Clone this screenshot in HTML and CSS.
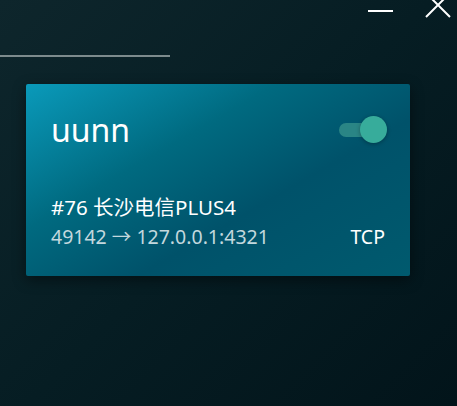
FILE: index.html
```html
<!DOCTYPE html>
<html lang="zh-CN">
  <head>
    <meta charset="UTF-8" />
    <meta name="viewport" content="width=device-width, initial-scale=1.0" />
    <title>Tunnels</title>
    <link rel="stylesheet" href="styles.css">
  </head>
  <body>
    <header class="titlebar">
      <button class="win-btn minimize" title="Minimize">
        <svg width="26" height="18" viewBox="0 0 26 18"><path d="M0 11 H25" stroke="#fff" stroke-width="2" /></svg>
      </button>
      <button class="win-btn close" title="Close">
        <svg width="30" height="18" viewBox="0 0 30 18"><path d="M2 -7 L26 17 M26 -7 L2 17" stroke="#fff" stroke-width="2" /></svg>
      </button>
    </header>

    <div class="tab-line"></div>

    <section class="tunnel">
      <div class="tunnel-head">
        <h2>uunn</h2>
        <label class="switch">
          <span class="track"></span>
          <span class="knob"></span>
        </label>
      </div>
      <p class="node">#76 长沙电信PLUS4</p>
      <div class="tunnel-foot">
        <span class="route">49142 → 127.0.0.1:4321</span>
        <span class="proto">TCP</span>
      </div>
    </section>
  </body>
</html>
```

FILE: styles.css
```css
html,
body {
  height: 100%;
}

body {
  margin: 0;
  overflow: hidden;
  background: linear-gradient(135deg, #0e262c 0%, #061d23 50%, #02141a 100%);
  color: #fff;
  font-family: "Noto Sans", "Noto Sans CJK SC", sans-serif;
}

.titlebar {
  display: flex;
  justify-content: flex-end;
  height: 18px;
}

.win-btn {
  background: none;
  border: none;
  padding: 0;
  display: block;
  height: 18px;
}
.win-btn svg {
  display: block;
}
.minimize {
  margin-right: 30px;
}
.close {
  margin-right: 3px;
}

.tab-line {
  width: 170px;
  height: 2px;
  margin-top: 37px;
  background: #7d8b8d;
}

.tunnel {
  margin: 27px 0 0 26px;
  width: 384px;
  height: 192px;
  box-sizing: border-box;
  padding: 26px 23px 0 25px;
  border-radius: 2px;
  background: linear-gradient(150deg, #0a9aba 0%, #006a80 35%, #00526a 62%, #005a6e 100%);
  box-shadow: 0 4px 14px rgba(0, 0, 0, 0.45);
}

.tunnel-head {
  display: flex;
  align-items: center;
  justify-content: space-between;
  height: 40px;
}

.tunnel-head h2 {
  margin: 0;
  font-size: 32px;
  font-weight: normal;
  line-height: 40px;
}

.switch {
  position: relative;
  width: 48px;
  height: 28px;
  display: block;
}
.track {
  position: absolute;
  left: 0;
  top: 7px;
  width: 34px;
  height: 14px;
  border-radius: 7px;
  background: #2a8585;
}
.knob {
  position: absolute;
  right: 0;
  top: 0;
  width: 27px;
  height: 27px;
  border-radius: 50%;
  background: #37ac9b;
  box-shadow: 0 1px 4px rgba(0, 0, 0, 0.3);
}

.node {
  margin: 42px 0 0;
  font-size: 20.5px;
  line-height: 30px;
}

.tunnel-foot {
  display: flex;
  justify-content: space-between;
  font-size: 19.5px;
  line-height: 30px;
  padding-right: 2px;
}

.route {
  color: #c3d8de;
}
```
